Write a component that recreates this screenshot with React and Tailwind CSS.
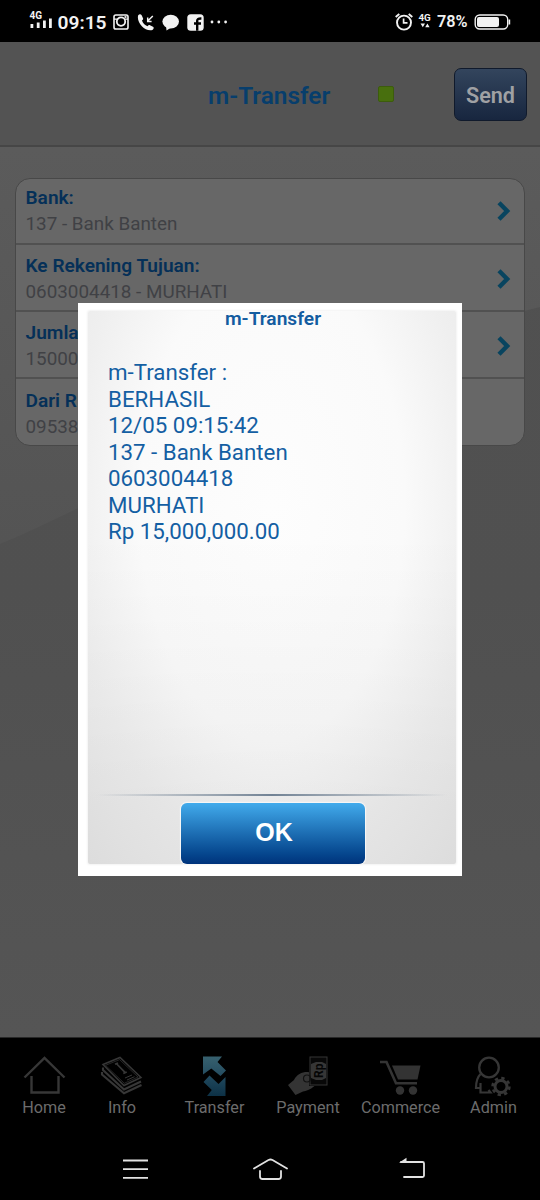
import React from "react";

const rows = [
  { label: "Bank:", value: "137 - Bank Banten", arrow: true },
  { label: "Ke Rekening Tujuan:", value: "0603004418 - MURHATI", arrow: true },
  { label: "Jumla", value: "15000", arrow: true },
  { label: "Dari R", value: "09538", arrow: false },
];

const receipt = [
  "m-Transfer :",
  "BERHASIL",
  "12/05 09:15:42",
  "137 - Bank Banten",
  "0603004418",
  "MURHATI",
  "Rp 15,000,000.00",
];

const StatusBar = () => (
  <div className="flex h-[42px] shrink-0 items-center bg-black pt-[2px] text-[#f2f2f2]">
    <svg className="ml-[29px] h-[22px] w-[24px]" viewBox="0 0 24 22" fill="currentColor">
      <text x="0.5" y="7.5" fontSize="10" fontWeight="700" fontFamily="Roboto, sans-serif">4G</text>
      <rect x="1.5" y="13" width="2.8" height="4" />
      <rect x="7.8" y="11.5" width="2.8" height="5.5" />
      <rect x="14" y="9.5" width="2.8" height="7.5" />
      <rect x="20" y="7.5" width="2.8" height="9.5" />
    </svg>
    <span className="ml-[4.5px] w-[50.5px] pt-px text-[19.2px] leading-none font-semibold">09:15</span>
    {/* notification icons */}
    <svg className="ml-[5px] h-[16px] w-[16px]" viewBox="0 0 16 16" fill="none" stroke="currentColor">
      <rect x="1" y="1" width="14" height="14" rx="1.8" strokeWidth="1.6" />
      <path d="M1 5.2H4.5M11.5 5.2H15" strokeWidth="1.2" />
      <circle cx="8" cy="7.6" r="4.2" strokeWidth="1.8" />
      <path d="M11.5 3H13.5" strokeWidth="1.8" />
    </svg>
    <svg className="ml-[8px] h-[17px] w-[18px]" viewBox="0 0 18 17">
      <path
        d="M1.2 1.2C2.5-.2 4 0 4.8 1.6L6 4.3C6.4 5.3 5.9 5.8 5 6.6C5.6 9 8 11.6 10.5 12.2C11.4 11.2 12 10.8 13 11.2L16 12.7C17.2 13.5 16.8 15 15.4 16C8.5 18.2-1 8.5 1.2 1.2Z"
        fill="currentColor"
      />
      <path d="M15.8 2L10.8 7M10.7 3.5V7.4H14.6" fill="none" stroke="currentColor" strokeWidth="1.5" />
    </svg>
    <svg className="ml-[7px] h-[17px] w-[18px]" viewBox="0 0 18 17" fill="currentColor">
      <ellipse cx="8.7" cy="7.6" rx="8.3" ry="6.9" />
      <path d="M4 11L4.5 16.4L10 13Z" />
    </svg>
    <svg className="ml-[7px] h-[17px] w-[17px]" viewBox="0 0 17 17">
      <rect x="0.3" y="0.3" width="16.4" height="16.4" rx="3.5" fill="currentColor" />
      <path d="M10.2 16.8V6.8C10.2 5 11.2 4.4 14.4 4.5M7 9.5H14" fill="none" stroke="#000" strokeWidth="2.4" />
    </svg>
    <svg className="ml-[6px] h-[4px] w-[18px]" viewBox="0 0 18 4" fill="currentColor">
      <circle cx="2" cy="2" r="1.4" />
      <circle cx="8.8" cy="2" r="1.4" />
      <circle cx="15.6" cy="2" r="1.4" />
    </svg>

    <svg className="ml-auto h-[18px] w-[18px]" viewBox="0 0 18 18" fill="none" stroke="currentColor">
      <circle cx="9" cy="9.6" r="7" strokeWidth="1.9" />
      <path d="M8.6 5.5V9.8H12.5" strokeWidth="1.7" />
      <path d="M.7 4L4.3 1M17.3 4L13.7 1" strokeWidth="1.9" />
    </svg>
    <svg className="ml-[5px] h-[18px] w-[14px]" viewBox="0 0 14 18" fill="currentColor">
      <text x="0.5" y="8" fontSize="9.8" fontWeight="700" fontFamily="Roboto, sans-serif">4G</text>
      <path d="M2.5 10.5H7L4.8 14.3ZM7.2 14.3H11.6L9.4 10.5Z" />
    </svg>
    <span className="ml-[5px] w-[32px] pt-px text-[16.3px] leading-none font-semibold">78%</span>
    <svg className="mr-[29px] ml-[5px] h-[16px] w-[37px]" viewBox="0 0 37 16">
      <rect x="1.2" y="1" width="32.5" height="14" rx="4.5" fill="none" stroke="currentColor" strokeWidth="1.4" />
      <rect x="3" y="3" width="22" height="10" rx="2" fill="currentColor" />
      <path d="M35.4 5.5V10.5" stroke="currentColor" strokeWidth="1.6" />
    </svg>
  </div>
);

const Header = () => (
  <div className="flex h-[105px] shrink-0 items-center border-b-2 border-[#464646] bg-[#535353] pt-px">
    <h1 className="mt-[4px] ml-[208px] w-[124px] text-[24.4px] font-semibold text-[#073e6c]">m-Transfer</h1>
    <span className="mt-[-1px] ml-[46px] size-4 rounded-[2px] border border-[#3c5c0c] bg-[#486f0e]" />
    <button className="ml-auto mr-[13px] h-[53px] w-[73px] rounded-[7px] border border-[#101a2c] bg-linear-to-b from-[#33455d] to-[#18263f] pt-[4px] text-[21.6px] font-semibold text-[#a0a1a4]">
      Send
    </button>
  </div>
);

const Row = ({ label, value, arrow }) => (
  <div className="flex h-[67.25px] items-center justify-between border-b-2 border-[#515151] pt-[4px] pr-[13px] pl-[9.5px] first:h-[65.5px] first:pt-[1px] last:h-[65.5px] last:border-b-0">
    <div className="text-[18.85px] leading-[26px]">
      <p className="text-[19.1px] font-semibold text-[#053058]">{label}</p>
      <p className="text-[#404145]">{value}</p>
    </div>
    {arrow && (
      <svg className="h-[20px] w-[14px]" viewBox="0 0 14 20" fill="none" stroke="#08445f" strokeWidth="4.4">
        <path d="M2 1.7L10.2 10L2 18.3" />
      </svg>
    )}
  </div>
);

const icons = {
  Home: (
    <path d="M3.5 21.5L23.5 2L43.5 21.5M10.5 20V36.5H37.5V20" fill="none" stroke="#373737" strokeWidth="2.4" />
  ),
  Info: (
    <g fill="none" stroke="#373737" strokeWidth="1.5">
      <path d="M4 8.5L21 1.5L42 21.5L25 29.5Z" />
      <path d="M6.5 9.3L20.6 3.6L39 21L25.3 27.3Z" strokeWidth=".7" />
      <path d="M4 11.5V14L25 33.5L42 25.5M3 16V18.5L25 37.2L42.5 29" strokeWidth="2.1" />
      <path d="M16 8.3L19 7M17.8 8L26 16.3M24.3 17.5L27.7 16" strokeWidth="1.7" />
      <path d="M26 22L33 19M28 24L35.5 20.7" strokeWidth="1" />
    </g>
  ),
  Transfer: (
    <g>
      <defs>
        <linearGradient id="transferUp" x1="0" y1="0" x2="0" y2="1">
          <stop stopColor="#37616f" />
          <stop offset="1" stopColor="#244c60" />
        </linearGradient>
        <linearGradient id="transferDown" x1="0" y1="0" x2="0" y2="1">
          <stop stopColor="#214a5f" />
          <stop offset="1" stopColor="#0d3146" />
        </linearGradient>
      </defs>
      <path d="M12 .5H31L26.5 6L35 14.5L29.5 20L20.3 12.5L12 18.5Z" fill="url(#transferUp)" />
      <path d="M12.5 26L18.5 19.5L27.5 28L34.5 21V40H16L20.8 34Z" fill="url(#transferDown)" />
    </g>
  ),
  Payment: (
    <g>
      <path d="M3 29L9 24C12 18 18 15.5 24 16.2V30H29.5C25 34 21 35 18 35.5L10.5 39Z" fill="#343434" />
      <rect x="25" y="1" width="17" height="28" fill="#080808" stroke="#343434" />
      <path d="M26 8L31 6H37L41 8V22L37 24H31L26 22Z" fill="#363636" />
      <circle cx="22" cy="22.5" r="3.5" fill="none" stroke="#111" strokeWidth="1.2" />
      <text
        transform="translate(37.5 22) rotate(-90)"
        fontFamily="Roboto, sans-serif"
        fontSize="12"
        fontWeight="700"
        fill="#050505"
      >
        Rp
      </text>
    </g>
  ),
  Commerce: (
    <g>
      <path d="M3 6H9.5L19 27.2H40" fill="none" stroke="#343434" strokeWidth="2.6" />
      <path d="M15 9.5H43.5L40.5 23.5H21Z" fill="#333" />
      <circle cx="23" cy="34.5" r="4.2" fill="#333" />
      <circle cx="36" cy="34.5" r="4.2" fill="#333" />
    </g>
  ),
  Admin: (
    <g fill="none" stroke="#363636">
      <circle cx="19" cy="11.5" r="9.8" strokeWidth="2.3" />
      <path d="M10.5 18C7 21.5 6 26 6 32H10.5V27M10.5 32V36.5H20.5L18.5 34M10.5 34V36.5" strokeWidth="2.2" />
      <circle cx="31" cy="30.5" r="6" strokeWidth="3" />
      <circle cx="31" cy="30.5" r="8.4" strokeWidth="2.6" strokeDasharray="3.3 3.3" />
    </g>
  ),
};

const tabs = [
  { name: "Home", width: "w-[88px]" },
  { name: "Info", width: "w-[68px]" },
  { name: "Transfer", width: "w-[117px]" },
  { name: "Payment", width: "w-[70px]" },
  { name: "Commerce", width: "w-[115px]" },
  { name: "Admin", width: "w-[71px]" },
];

const TabBar = () => (
  <nav className="flex h-[97px] shrink-0 border-t border-[#282828] bg-black pt-[18px]">
    {tabs.map((tab) => (
      <div key={tab.name} className={`flex shrink-0 flex-col items-center ${tab.width}`}>
        <svg className="h-[42px] w-[47px] shrink-0" viewBox="0 0 47 42">
          {icons[tab.name]}
        </svg>
        <span className="text-[16.2px] leading-[19px] text-[#6c6c6c]">{tab.name}</span>
      </div>
    ))}
  </nav>
);

const SystemNav = () => (
  <div className="flex h-[66px] shrink-0 items-center bg-black pt-[3px] text-[#e2e2e2]">
    <svg className="ml-[122px] h-[22px] w-[27px]" viewBox="0 0 27 22" fill="none" stroke="currentColor" strokeWidth="1.8">
      <path d="M1 2.5H26M1 11.2H26M1 19.8H26" />
    </svg>
    <svg
      className="ml-[103px] h-[24px] w-[37px]"
      viewBox="0 0 37 24"
      fill="none"
      stroke="currentColor"
      strokeWidth="1.8"
      strokeLinecap="round"
    >
      <path d="M2 11.5L16.5 3Q18.5 2 20.5 3L35 11.5M8 14V19.5Q8 22 10.5 22H26.5Q29 22 29 19.5V14" />
    </svg>
    <svg className="ml-[109px] h-[23px] w-[29px]" viewBox="0 0 29 23">
      <path
        d="M3 5H24.5Q26 5 26 6.5V18.5Q26 20 24.5 20H6"
        fill="none"
        stroke="currentColor"
        strokeWidth="1.8"
        strokeLinecap="round"
      />
      <path d="M1 5.7L8.5 .8V5.7Z" fill="currentColor" />
    </svg>
  </div>
);

// modal that shows the transfer receipt
const ReceiptDialog = () => (
  <div className="absolute top-[303px] left-[78px] h-[573px] w-[384px] bg-white pt-[8px] pr-[6px] pb-[12px] pl-[10px]">
    <div className="flex h-full flex-col items-center rounded-[2px] bg-[linear-gradient(to_bottom,transparent_40%,rgba(0,0,0,0.045)_90%),radial-gradient(ellipse_80%_95%_at_50%_35%,#fdfdfd_0%,#fafafa_45%,#efefef_68%,#e4e4e4_100%)] shadow-[0_0_2px_1px_#f3f3f3]">
      <h2 className="mt-[-4px] ml-[2px] h-[24px] text-[19.2px] leading-[24px] font-semibold text-[#135ca0]">m-Transfer</h2>
      <div className="mt-[28px] w-full pl-[20px] text-[22.3px] leading-[26.5px] text-[#145fa3]">
        {receipt.map((line) => (
          <p key={line}>{line}</p>
        ))}
      </div>
      <div className="mt-auto h-[2px] w-[350px] bg-linear-to-r from-transparent via-[#718294] to-transparent" />
      <button className="mt-[7px] ml-[2px] h-[61px] w-[184px] shrink-0 rounded-[6px] bg-linear-to-b from-[#42abec] to-[#00337c] pb-px pl-[2px] font-['Liberation_Sans',sans-serif] text-[25px] font-bold text-white shadow-[0_0_1px_1px_#f8f8f8]">
        OK
      </button>
    </div>
  </div>
);

export default function App() {
  return (
    <div className="relative flex h-[1200px] w-[540px] flex-col overflow-hidden bg-black font-[Roboto,sans-serif]">
      <StatusBar />
      <Header />
      <main className="relative h-[890px] shrink-0 bg-linear-to-b from-[#515151] via-[#505050] to-[#555555]">
        <svg className="absolute inset-0 h-full w-full" viewBox="0 0 540 890" fill="none">
          <defs>
            <linearGradient id="sweep" x1="0" y1="0" x2="0" y2="1">
              <stop stopColor="#5b5b5b" />
              <stop offset="1" stopColor="#545454" />
            </linearGradient>
          </defs>
          <path d="M0 0H540V160C330 210 160 330 0 397Z" fill="url(#sweep)" />
        </svg>
        <div className="relative mx-[15px] mt-[31px] rounded-[15px] border border-[#484848] bg-[#676767]">
          {rows.map((row) => (
            <Row key={row.label} {...row} />
          ))}
        </div>
      </main>
      <TabBar />
      <SystemNav />
      <ReceiptDialog />
    </div>
  );
}
